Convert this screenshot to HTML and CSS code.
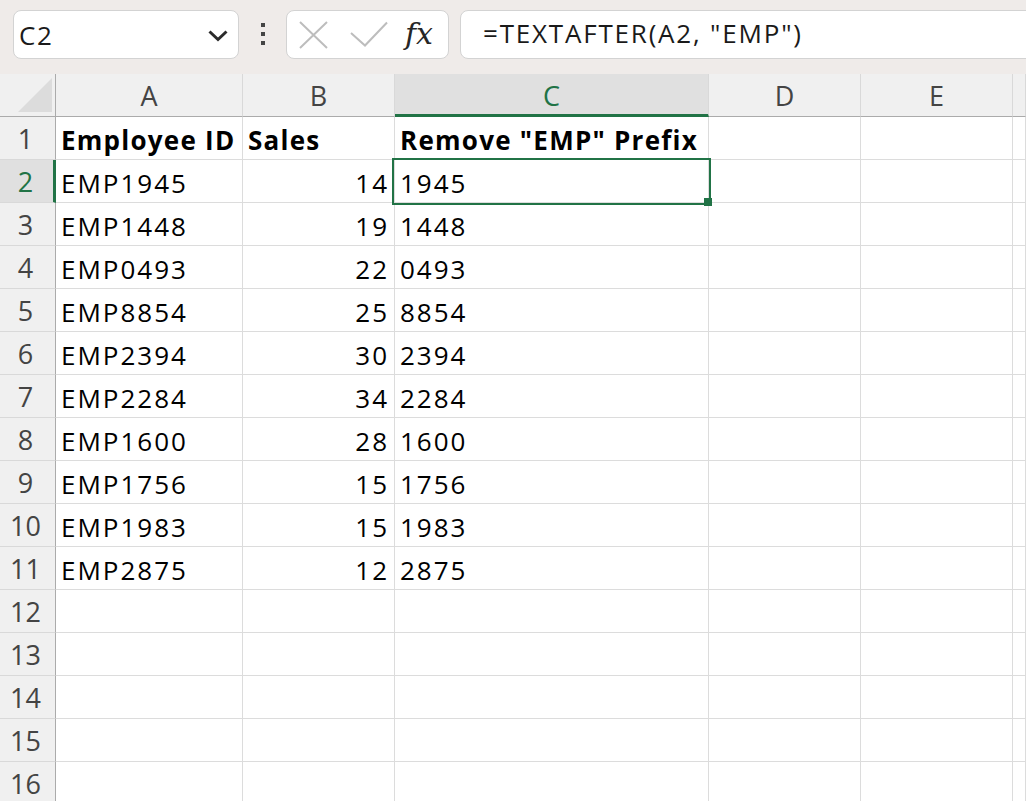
FILE: index.html
```html
<!DOCTYPE html>
<html>
<head>
<meta charset="utf-8">
<link rel="stylesheet" href="styles.css">
</head>
<body>
<div class="toolbar">
  <div class="namebox"><span class="name">C2</span>
    <svg class="chev" width="20" height="12" viewBox="0 0 20 12"><path d="M1.5 1.5 L10 9.5 L18.5 1.5" fill="none" stroke="#2b2b2b" stroke-width="3"/></svg>
  </div>
  <div class="dots"><span></span><span></span><span></span></div>
  <div class="fxbox">
    <svg width="29" height="28" viewBox="0 0 29 28"><path d="M1 1 L28 27 M28 1 L1 27" stroke="#bdbdbd" stroke-width="2" fill="none"/></svg>
    <svg class="check" width="38" height="26" viewBox="0 0 38 26"><path d="M1 12 L15 24.5 L37 1.5" stroke="#bdbdbd" stroke-width="2" fill="none"/></svg>
    <span class="fx">fx</span>
  </div>
  <div class="formula">=TEXTAFTER(A2, "EMP")</div>
</div>
<div class="sheet">
  <div class="corner"><svg width="56" height="43" viewBox="0 0 56 43"><polygon points="52,4 52,38 18,38" fill="#dcdcdc"/></svg></div>
  <div class="ch">A</div><div class="ch">B</div><div class="ch sel">C</div><div class="ch">D</div><div class="ch">E</div><div class="ch"></div>

  <div class="rh">1</div><div class="c b">Employee ID</div><div class="c b">Sales</div><div class="c b">Remove "EMP" Prefix</div><div class="c"></div><div class="c"></div><div class="c"></div>
  <div class="rh sel">2</div><div class="c">EMP1945</div><div class="c n">14</div><div class="c active">1945<div class="selbox"></div><div class="handle"></div></div><div class="c"></div><div class="c"></div><div class="c"></div>
  <div class="rh">3</div><div class="c">EMP1448</div><div class="c n">19</div><div class="c">1448</div><div class="c"></div><div class="c"></div><div class="c"></div>
  <div class="rh">4</div><div class="c">EMP0493</div><div class="c n">22</div><div class="c">0493</div><div class="c"></div><div class="c"></div><div class="c"></div>
  <div class="rh">5</div><div class="c">EMP8854</div><div class="c n">25</div><div class="c">8854</div><div class="c"></div><div class="c"></div><div class="c"></div>
  <div class="rh">6</div><div class="c">EMP2394</div><div class="c n">30</div><div class="c">2394</div><div class="c"></div><div class="c"></div><div class="c"></div>
  <div class="rh">7</div><div class="c">EMP2284</div><div class="c n">34</div><div class="c">2284</div><div class="c"></div><div class="c"></div><div class="c"></div>
  <div class="rh">8</div><div class="c">EMP1600</div><div class="c n">28</div><div class="c">1600</div><div class="c"></div><div class="c"></div><div class="c"></div>
  <div class="rh">9</div><div class="c">EMP1756</div><div class="c n">15</div><div class="c">1756</div><div class="c"></div><div class="c"></div><div class="c"></div>
  <div class="rh">10</div><div class="c">EMP1983</div><div class="c n">15</div><div class="c">1983</div><div class="c"></div><div class="c"></div><div class="c"></div>
  <div class="rh">11</div><div class="c">EMP2875</div><div class="c n">12</div><div class="c">2875</div><div class="c"></div><div class="c"></div><div class="c"></div>
  <div class="rh">12</div><div class="c"></div><div class="c"></div><div class="c"></div><div class="c"></div><div class="c"></div><div class="c"></div>
  <div class="rh">13</div><div class="c"></div><div class="c"></div><div class="c"></div><div class="c"></div><div class="c"></div><div class="c"></div>
  <div class="rh">14</div><div class="c"></div><div class="c"></div><div class="c"></div><div class="c"></div><div class="c"></div><div class="c"></div>
  <div class="rh">15</div><div class="c"></div><div class="c"></div><div class="c"></div><div class="c"></div><div class="c"></div><div class="c"></div>
  <div class="rh">16</div><div class="c"></div><div class="c"></div><div class="c"></div><div class="c"></div><div class="c"></div><div class="c"></div>
</div>
</body>
</html>
```
FILE: styles.css
```css
html, body {
  margin: 0;
  padding: 0;
  background: #ffffff;
  overflow: hidden;
  width: 1026px;
  height: 801px;
  font-family: "Open Sans", "Liberation Sans", sans-serif;
}
.toolbar {
  height: 74px;
  box-sizing: border-box;
  background: #efebe9;
  display: flex;
  align-items: flex-start;
  padding: 10px 0 0 13px;
  overflow: hidden;
  white-space: nowrap;
}
.namebox {
  width: 226px;
  height: 49px;
  box-sizing: border-box;
  background: #fff;
  border: 1px solid #d3d3d3;
  border-radius: 8px;
  display: flex;
  align-items: center;
  justify-content: space-between;
  padding: 0 10px 0 5px;
  flex: none;
}
.name {
  font-size: 26px;
  letter-spacing: 1.5px;
  color: #1a1a1a;
  line-height: 1;
}
.chev { margin-top: 2px; }
.dots {
  width: 47px;
  display: flex;
  flex-direction: column;
  align-items: center;
  gap: 5px;
  padding-top: 13px;
  flex: none;
}
.dots span {
  width: 4px;
  height: 4px;
  background: #444;
  display: block;
}
.fxbox {
  width: 163px;
  height: 49px;
  box-sizing: border-box;
  background: #fff;
  border: 1px solid #d3d3d3;
  border-radius: 8px;
  display: flex;
  align-items: center;
  padding: 0 0 0 12px;
  flex: none;
}
.check { margin-left: 22px; margin-top: -2px; }
.fx {
  font-family: "DejaVu Serif", "Liberation Serif", serif;
  font-style: italic;
  font-size: 30px;
  color: #262626;
  margin-left: 17px;
  margin-top: -2px;
}
.formula {
  margin-left: 11px;
  width: 700px;
  height: 49px;
  box-sizing: border-box;
  background: #fff;
  border: 1px solid #d3d3d3;
  border-radius: 8px;
  padding: 0 0 0 22px;
  font-size: 26px;
  letter-spacing: 1.8px;
  line-height: 45px;
  color: #1a1a1a;
  flex: none;
}
.sheet {
  display: grid;
  grid-template-columns: 56px 187px 152px 314px 152px 152px 1fr;
  grid-auto-rows: 43px;
}
.sheet > div {
  box-sizing: border-box;
  white-space: nowrap;
}
.corner {
  background: #f0f0f0;
  border-right: 1px solid #ababab;
  border-bottom: 1px solid #ababab;
}
.corner svg { display: block; }
.ch {
  background: #f0f0f0;
  border-right: 1px solid #d9d9d9;
  border-bottom: 1px solid #ababab;
  text-align: center;
  font-size: 27px;
  color: #444;
  padding-top: 3px;
  line-height: 38px;
}
.ch.sel {
  background: #e0e0e0;
  color: #217346;
  border-bottom: 3px solid #217346;
}
.rh {
  background: #f0f0f0;
  border-right: 1px solid #ababab;
  border-bottom: 1px solid #d9d9d9;
  text-align: center;
  padding-right: 4px;
  font-size: 27px;
  color: #444;
  padding-top: 3px;
  line-height: 38px;
}
.rh.sel {
  background: #e0e0e0;
  color: #217346;
  border-right: 3px solid #217346;
  padding-right: 2px;
}
.c {
  background: #fff;
  border-right: 1px solid #dcdcdc;
  border-bottom: 1px solid #dcdcdc;
  font-size: 26px;
  letter-spacing: 2px;
  color: #000;
  padding: 4px 5px 0 5px;
  line-height: 38px;
  overflow: visible;
}
.c.b { font-weight: bold; letter-spacing: 1.25px; }
.c.n { text-align: right; padding-right: 5px; }
.c.active { position: relative; }
.selbox {
  position: absolute;
  left: -3px;
  top: -2px;
  width: 319px;
  height: 47px;
  box-sizing: border-box;
  border: 2px solid #217346;
}
.handle {
  position: absolute;
  left: 309px;
  top: 38px;
  width: 8px;
  height: 8px;
  background: #217346;
}
```
